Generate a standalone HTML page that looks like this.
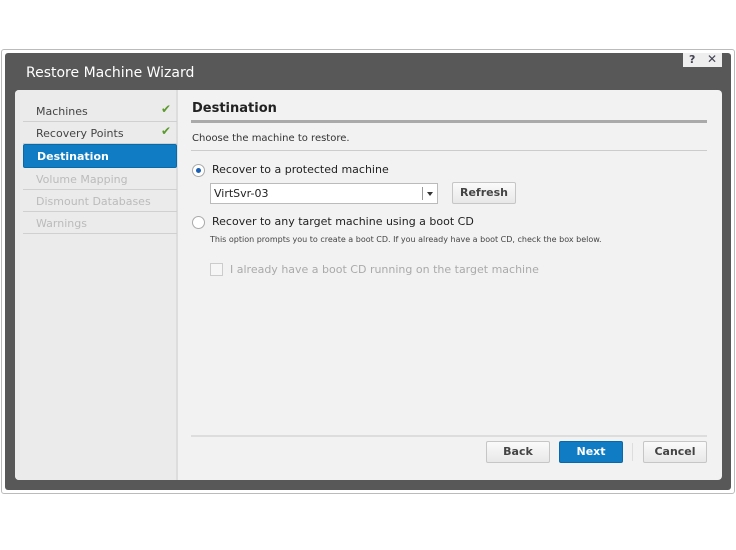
<!DOCTYPE html><html><head><style>
*{margin:0;padding:0;box-sizing:border-box}
body{width:736px;height:550px;background:#fff;font-family:"DejaVu Sans","Liberation Sans",sans-serif;position:relative;overflow:hidden}
.a{position:absolute}
.outer{left:1px;top:49px;width:734px;height:445px;border:1px solid #bbb;border-radius:3px;background:#fff}
.dark{left:5px;top:53px;width:726px;height:437px;background:#585858;border-radius:3px}
.title{left:26px;top:65px;color:#fff;font-size:14px}
.hc{left:683px;top:53px;width:39px;height:14px;background:#eee;font-size:11px;font-weight:bold;color:#445;}
.panel{left:15px;top:90px;width:707px;height:390px;background:#f2f2f2;border-radius:4px;overflow:hidden}
.side{left:0;top:0;width:163px;height:390px;background:#ebebeb;border-right:2px solid #ddd}
.item{position:absolute;left:8px;width:154px;height:22px;border-bottom:1px solid #d0d0d0;font-size:11px;color:#444;padding:5px 0 0 13px}
.dis{color:#bbb}
.chk{position:absolute;right:6px;top:2px;color:#5a9a2a;font-size:12px}
.sel{background:#0f7cc4;color:#fff;font-weight:bold;border:1px solid #0a6aa8;border-radius:2px}
.btn{position:absolute;height:22px;border:1px solid #c6c6c6;border-radius:2px;background:linear-gradient(#fafafa,#e8e8e8);font-size:11px;font-weight:bold;color:#444;text-align:center;line-height:20px}
.radio{position:absolute;width:13px;height:13px;border:1px solid #aaa;border-radius:50%;background:#fff}
</style></head><body>
<div class="a outer"></div>
<div class="a dark"></div>
<div class="a title">Restore Machine Wizard</div>
<div class="a hc"><span style="position:absolute;left:6px;top:0">?</span><span style="position:absolute;left:24px;top:-1px;font-size:12px">✕</span></div>
<div class="a panel">
 <div class="a side">
  <div class="item" style="top:10px">Machines<span class="chk">✔</span></div>
  <div class="item" style="top:32px">Recovery Points<span class="chk">✔</span></div>
  <div class="item sel" style="top:54px;height:24px;padding-top:5px">Destination</div>
  <div class="item dis" style="top:78px">Volume Mapping</div>
  <div class="item dis" style="top:100px">Dismount Databases</div>
  <div class="item dis" style="top:122px">Warnings</div>
 </div>
 <div class="a" style="left:177px;top:11px;font-size:13px;font-weight:bold;color:#222">Destination</div>
 <div class="a" style="left:176px;top:30px;width:516px;height:3px;background:#aaa"></div>
 <div class="a" style="left:177px;top:43px;font-size:10px;color:#333">Choose the machine to restore.</div>
 <div class="a" style="left:176px;top:60px;width:516px;height:1px;background:#ccc"></div>
 <div class="radio" style="left:177px;top:74px"><div style="position:absolute;left:3px;top:3px;width:5px;height:5px;border-radius:50%;background:#1a5fb4"></div></div>
 <div class="a" style="left:197px;top:73px;font-size:11px;color:#222">Recover to a protected machine</div>
 <div class="a" style="left:195px;top:93px;width:228px;height:21px;border:1px solid #bbb;background:#fff;font-size:11px;color:#222;padding:3px 0 0 3px">VirtSvr-03<div style="position:absolute;right:14px;top:3px;width:1px;height:13px;background:#999"></div><div style="position:absolute;right:4px;top:8px;border:3px solid transparent;border-top:4px solid #333"></div></div>
 <div class="btn" style="left:437px;top:92px;width:64px">Refresh</div>
 <div class="radio" style="left:177px;top:126px"></div>
 <div class="a" style="left:197px;top:125px;font-size:11px;color:#222">Recover to any target machine using a boot CD</div>
 <div class="a" style="left:195px;top:145px;font-size:8px;color:#444">This option prompts you to create a boot CD. If you already have a boot CD, check the box below.</div>
 <div class="a" style="left:195px;top:173px;width:13px;height:13px;border:1px solid #ccc;background:#f6f6f6"></div>
 <div class="a" style="left:215px;top:173px;font-size:11px;color:#aaa">I already have a boot CD running on the target machine</div>
 <div class="a" style="left:176px;top:345px;width:516px;height:2px;background:#ddd"></div>
 <div class="btn" style="left:471px;top:351px;width:64px">Back</div>
 <div class="btn" style="left:544px;top:351px;width:64px;background:#0f7cc4;border-color:#0a6aa8;color:#fff">Next</div>
 <div class="a" style="left:617px;top:353px;width:1px;height:18px;background:#ddd"></div>
 <div class="btn" style="left:628px;top:351px;width:64px">Cancel</div>
</div>
</body></html>
